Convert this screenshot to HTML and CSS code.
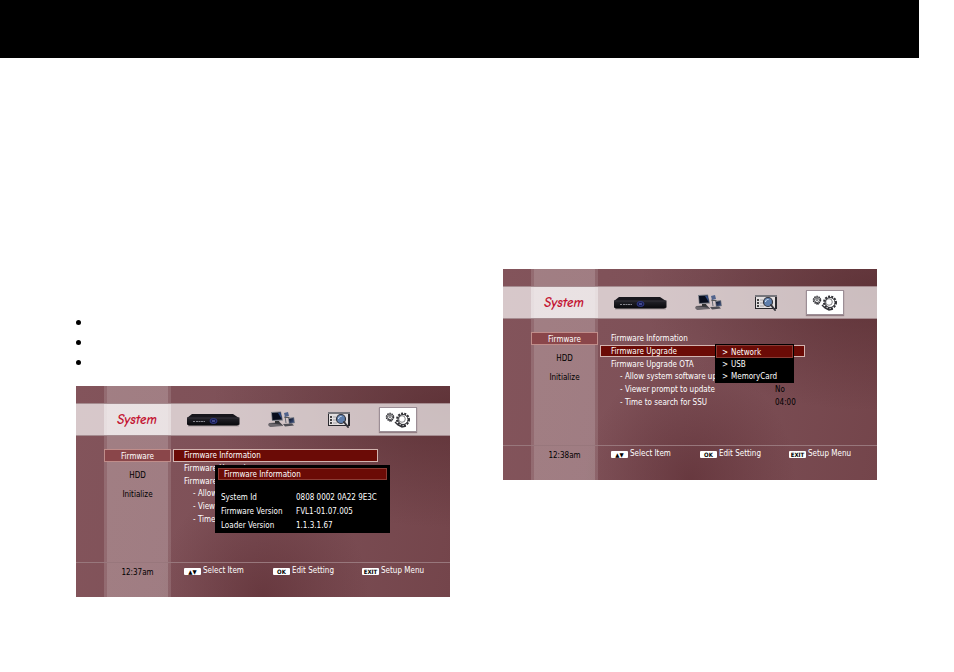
FILE: index.html
```
<!DOCTYPE html>
<html lang="en">

<head>
  <meta charset="UTF-8">
  <title>System - Firmware</title>
  <link rel="stylesheet" href="styles.css">
</head>

<body>
  <!-- shared icons -->
  <svg class="sprite" aria-hidden="true">
    <defs>
      <linearGradient id="boxFront" x1="0" y1="0" x2="0" y2="1">
        <stop offset="0" stop-color="#25242b"/>
        <stop offset="1" stop-color="#08080c"/>
      </linearGradient>
      <linearGradient id="glass" x1="0" y1="0" x2="1" y2="1">
        <stop offset="0" stop-color="#0b1020"/>
        <stop offset="1" stop-color="#3f5486"/>
      </linearGradient>
    </defs>
    <symbol id="icon-box" viewBox="0 0 53 14">
      <path d="M1 12h51v1.500H1z" fill="#a79a9d"/>
      <path d="M5 1h41l6 4H0z" fill="#17161c"/>
      <path d="M0 4.500h52.500v7L50 12.500H2L0 11.500z" fill="url(#boxFront)"/>
      <path d="M0 5h52" stroke="#44434b" stroke-width=".5"/>
      <path d="M6 8.500h2M9 8.500h9" stroke="#85858d" stroke-width="1" stroke-dasharray="2 .5"/>
      <ellipse cx="26.500" cy="8" rx="3.500" ry="2.500" fill="#161b4c" stroke="#39419b" stroke-width=".8"/>
      <path d="M25 8h3" stroke="#7078cb"/>
    </symbol>
    <symbol id="icon-network" viewBox="0 0 27 17">
      <path d="M17 5l1 7M20 7l4 1" stroke="#666a75" fill="none"/>
      <path d="M3 1l10-.5 2 9-11 .5z" fill="#777b85"/>
      <path d="M4 2l8.500-.5 1.500 7-9.500.5z" fill="#080d1d"/>
      <path d="M10 2l2.500-.5 1.500 7z" fill="#304a85"/>
      <path d="M7 10h4l1 2H7z" fill="#333"/>
      <path d="M1 12l11-.5 3 3-13 1z" fill="#3c3b41"/>
      <path d="M1 12l-1 2 2 2 13-1v-1" fill="#6d686e"/>
      <path d="M16 2l4-1 1 4-4 1z" fill="#51638c"/>
      <path d="M16 6h5l1 1h-5z" fill="#555"/>
      <path d="M20 7l6-1 1 6-6 1z" fill="#777b85"/>
      <path d="M21 8l4.500-1 .5 4.500-4.500.5z" fill="url(#glass)"/>
      <path d="M15 13l9-.5 2 2-9 1z" fill="#4e4d54"/>
    </symbol>
    <symbol id="icon-photo" viewBox="0 0 24 18">
      <path d="M1 1h22v14H1z" fill="#29282d"/>
      <path d="M2 3h19v11H2z" fill="#e3dfe0"/>
      <path d="M1 1h22v2H1z" fill="#77767c"/>
      <path d="M3 6h2M3 9h2M3 12h2" stroke="#111" stroke-width="1.500"/>
      <path d="M6 6h3M6 9h3M6 12h4" stroke="#8b8a90" stroke-width=".7"/>
      <circle cx="14" cy="8" r="4.500" fill="#5e7eac" stroke="#33343c" stroke-width="1.200"/>
      <path d="M11.500 8a2.500 2.500 0 0 1 3-2.500" stroke="#d8e8fa" fill="none"/>
      <path d="M17 11l4 5" stroke="#35343b" stroke-width="2" stroke-linecap="round"/>
    </symbol>
    <symbol id="icon-gears" viewBox="0 0 26 18">
      <g fill="none" stroke="#303035">
        <circle cx="5" cy="6" r="3.500" stroke-width="1.500" stroke-dasharray="1.500 .7"/>
        <circle cx="5" cy="6" r="2.500" stroke-width=".7"/>
        <circle cx="5" cy="5.500" r="1" stroke-width=".8"/>
        <path d="M3 8l4 2M4 10h3" stroke-width=".8"/>
        <circle cx="18" cy="8.500" r="6" stroke-width="2" stroke-dasharray="2 1.200"/>
        <circle cx="18" cy="8.500" r="5" stroke-width="1"/>
        <circle cx="17" cy="8" r="3.300" stroke-width=".6"/>
        <path d="M10 11l3 3 4 2 4-1" stroke-width="1.400"/>
      </g>
    </symbol>
  </svg>

  <header class="page-bar"></header>

  <main class="columns">
    <section class="column column-info">
      <ul class="notes">
        <li></li>
        <li></li>
        <li></li>
      </ul>

      <div class="screen">
        <div class="topbar">
          <h2>System</h2>
          <nav class="tabs">
            <button class="tab tab-box" aria-label="Receiver"><svg width="53" height="14"><use href="#icon-box"/></svg></button>
            <button class="tab tab-network" aria-label="Network"><svg width="27" height="17"><use href="#icon-network"/></svg></button>
            <button class="tab tab-photo" aria-label="Media"><svg width="24" height="18"><use href="#icon-photo"/></svg></button>
            <button class="tab tab-gears active" aria-label="System"><svg width="26" height="18"><use href="#icon-gears"/></svg></button>
          </nav>
        </div>

        <div class="content">
          <div class="side">
            <button class="side-item active">Firmware</button>
            <button class="side-item">HDD</button>
            <button class="side-item">Initialize</button>
          </div>
          <div class="settings">
            <button class="row active">Firmware Information</button>
            <button class="row">Firmware Upgrade</button>
            <button class="row">Firmware Upgrade OTA</button>
            <button class="row sub">- Allow system software update</button>
            <button class="row sub">- Viewer prompt to update</button>
            <button class="row sub">- Time to search for SSU</button>
          </div>
        </div>

        <div class="footer">
          <span class="time">12:37am</span>
          <div class="keys">
            <span class="key"><kbd>▲▼</kbd>Select Item</span>
            <span class="key"><kbd>OK</kbd>Edit Setting</span>
            <span class="key"><kbd>EXIT</kbd>Setup Menu</span>
          </div>
        </div>

        <div class="dialog">
          <h3>Firmware Information</h3>
          <table>
            <tr><th>System Id</th><td>0808 0002 0A22 9E3C</td></tr>
            <tr><th>Firmware Version</th><td>FVL1-01.07.005</td></tr>
            <tr><th>Loader Version</th><td>1.1.3.1.67</td></tr>
          </table>
        </div>
      </div>
    </section>

    <section class="column column-upgrade">
      <div class="screen">
        <div class="topbar">
          <h2>System</h2>
          <nav class="tabs">
            <button class="tab tab-box" aria-label="Receiver"><svg width="53" height="14"><use href="#icon-box"/></svg></button>
            <button class="tab tab-network" aria-label="Network"><svg width="27" height="17"><use href="#icon-network"/></svg></button>
            <button class="tab tab-photo" aria-label="Media"><svg width="24" height="18"><use href="#icon-photo"/></svg></button>
            <button class="tab tab-gears active" aria-label="System"><svg width="26" height="18"><use href="#icon-gears"/></svg></button>
          </nav>
        </div>

        <div class="content">
          <div class="side">
            <button class="side-item active">Firmware</button>
            <button class="side-item">HDD</button>
            <button class="side-item">Initialize</button>
          </div>
          <div class="settings">
            <button class="row">Firmware Information</button>
            <button class="row active">Firmware Upgrade</button>
            <button class="row">Firmware Upgrade OTA</button>
            <button class="row sub">- Allow system software update</button>
            <button class="row sub">- Viewer prompt to update <span class="value">No</span></button>
            <button class="row sub">- Time to search for SSU <span class="value">04:00</span></button>
          </div>
        </div>

        <div class="footer">
          <span class="time">12:38am</span>
          <div class="keys">
            <span class="key"><kbd>▲▼</kbd>Select Item</span>
            <span class="key"><kbd>OK</kbd>Edit Setting</span>
            <span class="key"><kbd>EXIT</kbd>Setup Menu</span>
          </div>
        </div>

        <div class="menu">
          <button class="menu-item active"><span class="arrow">&gt;</span>Network</button>
          <button class="menu-item"><span class="arrow">&gt;</span>USB</button>
          <button class="menu-item"><span class="arrow">&gt;</span>MemoryCard</button>
        </div>
      </div>
    </section>
  </main>
</body>

</html>
```
FILE: styles.css
```
* {
  margin: 0;
  padding: 0;
  box-sizing: border-box;
}

body {
  background: #fff;
  color: #000;
  font-family: 'DejaVu Sans Condensed', 'DejaVu Sans', sans-serif;
  font-size: 8px;
  line-height: 12px;
}

button {
  background: none;
  border: none;
  color: inherit;
  font: inherit;
  text-align: left;
  white-space: nowrap;
  cursor: pointer;
}

.sprite {
  position: absolute;
  width: 0;
  height: 0;
}

.page-bar {
  height: 58px;
  margin-right: 35px;
  background: #000;
}

.columns {
  display: grid;
  grid-template-columns: minmax(0, 1fr) minmax(0, 1fr);
  align-items: start;
  gap: 53px;
  padding: 0 77px 40px 76px;
}

.column-info {
  padding-top: 254px;
}

.column-upgrade {
  padding-top: 211px;
}

/* bullet list */
.notes {
  list-style: none;
  margin-bottom: 14px;
}

.notes li {
  display: flex;
  align-items: center;
  height: 20px;
}

.notes li::before {
  content: "";
  width: 5px;
  height: 5px;
  border-radius: 50%;
  background: #000;
}

/* tv screen */
.screen {
  position: relative;
  padding-top: 17px;
  color: #fff;
  background:
    linear-gradient(90deg, transparent 28px, rgba(255, 255, 255, 0.14) 28px, rgba(255, 255, 255, 0.14) 31px, rgba(255, 255, 255, 0.25) 31px, rgba(255, 255, 255, 0.25) 92px, rgba(255, 255, 255, 0.12) 92px, rgba(255, 255, 255, 0.12) 95px, transparent 95px),
    radial-gradient(ellipse at 100% 10%, rgba(80, 38, 42, 0.6), transparent 45%),
    radial-gradient(ellipse at 50% 100%, rgba(86, 38, 44, 0.55), transparent 40%),
    linear-gradient(100deg, #83545b, #7d5057 50%, #74454b);
}

.topbar {
  display: flex;
  align-items: center;
  height: 33px;
  padding-left: 28px;
  background:
    linear-gradient(90deg, transparent 28px, rgba(255, 255, 255, 0.3) 28px, rgba(255, 255, 255, 0.3) 95px, transparent 95px),
    rgba(255, 255, 255, 0.68);
  border-top: 1px solid #a58c90;
  border-bottom: 1px solid #a58c90;
}

.topbar h2 {
  width: 66px;
  color: #c31331;
  font-family: 'Comic Neue', 'Lato', sans-serif;
  font-size: 13px;
  font-style: italic;
  font-weight: 700;
  line-height: 16px;
  text-align: center;
}

.tabs {
  display: flex;
  align-items: center;
  gap: 25px;
  margin-left: 17px;
}

.tab {
  display: flex;
  align-items: center;
  justify-content: center;
  height: 25px;
}

.tab-box {
  width: 53px;
}

.tab-network {
  width: 33px;
}

.tab-photo {
  width: 31px;
}

.tab-gears {
  width: 38px;
}

.tab.active {
  background: #fff;
  border: 1px solid #9c8e96;
  box-shadow: 0 1px 1px rgba(60, 30, 40, 0.4);
}

.content {
  display: flex;
  align-items: flex-start;
  height: 126px;
  padding: 13px 0 0 28px;
}

.side {
  display: flex;
  flex-direction: column;
  gap: 6px;
  width: 67px;
}

.side-item {
  height: 13px;
  padding-top: 2px;
  line-height: 11px;
  color: #000;
  text-align: center;
}

.side-item.active {
  background: #8a464a;
  box-shadow: inset 0 0 0 1px #c08d8a;
  color: #fff;
}

.settings {
  display: grid;
  grid-template-rows: repeat(6, 1fr);
  width: 205px;
  height: 76px;
  margin-left: 2px;
}

.row {
  position: relative;
  padding-top: 2px;
  padding-left: 11px;
  line-height: 10px;
}

.row.sub {
  padding-left: 20px;
}

.row.active {
  background: #6b0b06;
  box-shadow: inset 0 0 0 1px #d3b4b0;
}

.value {
  position: absolute;
  left: 175px;
  color: #000;
}

.footer {
  display: flex;
  align-items: flex-start;
  height: 35px;
  padding: 2px 0 0 28px;
  border-top: 1px solid #98777c;
}

.time {
  width: 67px;
  padding-top: 2px;
  color: #000;
  text-align: center;
}

.keys {
  display: grid;
  grid-template-columns: 89px 89px auto;
  margin-left: 13px;
}

.key {
  display: flex;
  align-items: center;
  gap: 2px;
  white-space: nowrap;
}

kbd {
  width: 17px;
  height: 7px;
  border-radius: 1px;
  background: #fff;
  color: #000;
  font-family: 'DejaVu Sans Condensed', 'DejaVu Sans', sans-serif;
  font-size: 6px;
  font-weight: 700;
  line-height: 7px;
  text-align: center;
}

/* firmware information popup */
.dialog {
  position: absolute;
  top: 79px;
  left: 139px;
  width: 175px;
  padding: 3px 3px 0;
  background: #000;
}

.dialog h3 {
  height: 12px;
  padding-top: 2px;
  padding-left: 6px;
  background: #6b0b06;
  box-shadow: inset 0 0 0 1px #8a3c35;
  font-size: 8px;
  font-weight: 400;
  line-height: 10px;
}

.dialog table {
  width: 100%;
  margin-top: 11px;
  border-collapse: collapse;
}

.dialog th,
.dialog td {
  height: 14px;
  font-weight: 400;
  text-align: left;
  white-space: nowrap;
}

.dialog th {
  width: 78px;
  padding-left: 3px;
}

/* upgrade source menu */
.menu {
  position: absolute;
  top: 75px;
  left: 212px;
  display: flex;
  flex-direction: column;
  width: 79px;
  padding: 1px;
  background: #000;
}

.menu-item {
  display: flex;
  height: 12px;
  padding-top: 1px;
  padding-left: 6px;
  line-height: 11px;
}

.menu-item.active {
  height: 13px;
  padding-top: 2px;
  background: #6b0b06;
  box-shadow: inset 0 0 0 1px #8a3c35;
}

.arrow {
  width: 9px;
}
```
